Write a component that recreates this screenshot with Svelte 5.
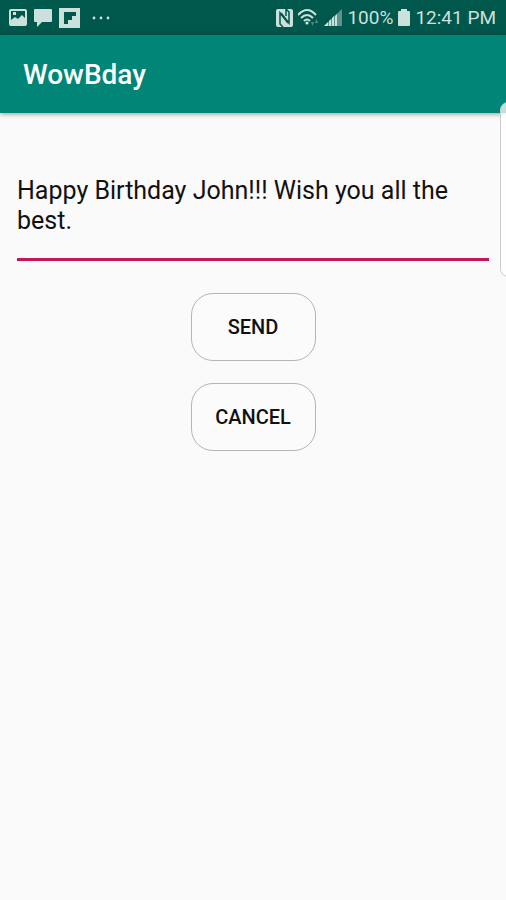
<script>
  let message = $state("Happy Birthday John!!! Wish you all the best.");
</script>

<div class="screen">
  <div class="status">
    <div class="group left">
      <svg width="18" height="17" viewBox="0 0 18 17" aria-hidden="true">
        <path
          fill-rule="evenodd"
          d="M2 0h14a2 2 0 0 1 2 2v13a2 2 0 0 1-2 2H2a2 2 0 0 1-2-2V2a2 2 0 0 1 2-2zM2 2v9l4-3 3 2 4-4 3 3V2zM4 3h3v3H4z" />
      </svg>
      <svg width="18" height="18" viewBox="0 0 18 18" aria-hidden="true">
        <path d="M1 0h16a1 1 0 0 1 1 1v11a1 1 0 0 1-1 1H8l-5 5v-5H1a1 1 0 0 1-1-1V1a1 1 0 0 1 1-1z" />
      </svg>
      <svg width="21" height="20" viewBox="0 0 21 20" aria-hidden="true">
        <path fill-rule="evenodd" d="M0 0h21v20H0zM5 4v12h4v-4h4V8h4V4z" />
      </svg>
      <svg class="dots" width="18" height="4" viewBox="0 0 18 4" aria-hidden="true">
        <circle cx="2" cy="2" r="1.4" />
        <circle cx="9" cy="2" r="1.4" />
        <circle cx="16" cy="2" r="1.4" />
      </svg>
    </div>
    <div class="group right">
      <svg width="17" height="18" viewBox="0 0 17 18" aria-hidden="true">
        <path d="M2 0h13a2 2 0 0 1 2 2v14a2 2 0 0 1-2 2H2a2 2 0 0 1-2-2V2a2 2 0 0 1 2-2z" />
        <path fill="none" stroke="#00574b" stroke-width="1.500" d="M7 18l-3-3V4l8 10M5 4l8 10V3l-3-3v7" />
      </svg>
      <svg width="21" height="18" viewBox="0 0 21 18" aria-hidden="true">
        <g fill="none" stroke="#cce0dc" stroke-width="2">
          <path d="M0 6Q9-4 18 6" />
          <path d="M3 9q6-6 12 0" />
          <path d="M6 12q3-3 6 0" />
        </g>
        <circle cx="9" cy="14" r="1.6" />
        <path opacity="0.4" d="M13 13h3l-1.500 4zM17 14l1.500-4 1.500 4z" />
      </svg>
      <svg width="18" height="17" viewBox="0 0 18 17" aria-hidden="true">
        <path opacity="0.45" d="M0 17 18 0v17z" />
        <path d="M0 17l4-4v4zM5 17v-5l2-2v7zM8 17V9l2-2v10zM11 17V7l2-2v12z" />
      </svg>
      <span>100%</span>
      <svg width="12" height="17" viewBox="0 0 12 17" aria-hidden="true">
        <path d="M3 0h6v2h2a1 1 0 0 1 1 1v13a1 1 0 0 1-1 1H1a1 1 0 0 1-1-1V3a1 1 0 0 1 1-1h2z" />
      </svg>
      <span>12:41 PM</span>
    </div>
  </div>

  <header>
    <h1>WowBday</h1>
  </header>

  <main>
    <textarea rows="2" aria-label="Message" bind:value={message}></textarea>
    <button type="button">SEND</button>
    <button type="button">CANCEL</button>
  </main>

  <div class="edge-panel"></div>
</div>

<style>
  :global(body) {
    margin: 0;
    background: #fafafa;
  }

  .screen {
    position: relative;
    min-height: 100vh;
    overflow: hidden;
    background: #fafafa;
    font-family: Roboto, "Liberation Sans", sans-serif;
  }

  .status {
    display: flex;
    justify-content: space-between;
    align-items: center;
    height: 35px;
    padding: 0 10px 0 9px;
    box-sizing: border-box;
    background: #00574b;
    color: #cce0dc;
    font-size: 19px;
  }

  .group {
    display: flex;
    align-items: center;
    white-space: nowrap;
  }

  .left {
    gap: 7px;
  }

  .right {
    gap: 5px;
  }

  .dots {
    margin-left: 5px;
  }

  svg {
    display: block;
    fill: #cce0dc;
  }

  header {
    display: flex;
    align-items: center;
    height: 78px;
    padding: 2px 23px 0;
    box-sizing: border-box;
    background: #008577;
    box-shadow: 0 1px 5px rgba(0, 0, 0, 0.4);
  }

  h1 {
    margin: 0;
    color: #fff;
    font-size: 28px;
    font-weight: 500;
    line-height: 32px;
  }

  main {
    display: flex;
    flex-direction: column;
    align-items: center;
    gap: 22px;
    padding: 63px 17px 0;
  }

  textarea {
    width: 100%;
    box-sizing: border-box;
    margin: 0 0 10px;
    padding: 0 0 22px;
    border: none;
    border-bottom: 3px solid #c2185b;
    border-radius: 0;
    outline: none;
    resize: none;
    overflow: hidden;
    background: none;
    color: #111;
    font-family: inherit;
    font-size: 25px;
    line-height: 30px;
  }

  button {
    width: 125px;
    height: 68px;
    padding: 0;
    border: 1px solid #b5b5b5;
    border-radius: 22px;
    background: #fbfbfb;
    color: #111;
    font-family: inherit;
    font-size: 20px;
    font-weight: 500;
  }

  .edge-panel {
    position: absolute;
    top: 102px;
    right: -10px;
    width: 14px;
    height: 173px;
    border: 1px solid #ccc;
    border-radius: 8px;
    background: rgba(255, 255, 255, 0.75);
  }
</style>
